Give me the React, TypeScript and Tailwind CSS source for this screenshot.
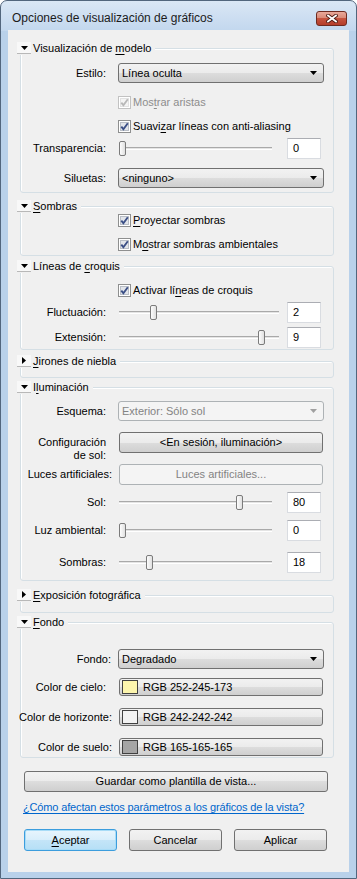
import type { ReactNode } from 'react'

const btnFace = 'border border-[#707070] bg-[linear-gradient(#f2f2f2,#ebebeb_50%,#dddddd_50%,#cfcfcf)]'
const btnOff = 'border border-[#adb2b5] bg-[#f4f4f4] text-[#838383]'

function U({ children }: { children: ReactNode }) {
  return <span className="underline decoration-1 underline-offset-2">{children}</span>
}

function Arrow({ off }: { off?: boolean }) {
  return (
    <svg width="7" height="4" viewBox="0 0 7 4" className="shrink-0">
      <path d="M0 0h7L3.5 4z" fill={off ? '#a0a0a0' : '#000'} />
    </svg>
  )
}

function Header({ open = true, children }: { open?: boolean; children: ReactNode }) {
  return (
    <div className="relative z-10 -ml-[3px] flex h-[14px] w-fit items-center bg-[#f0f0f0] pr-[4px]">
      <div className="flex h-[12px] w-[14px] items-center justify-center border-b border-[#b8b8b8] bg-[#f8f8f8]">
        {open ? (
          <Arrow />
        ) : (
          <svg width="4" height="7" viewBox="0 0 4 7">
            <path d="M0 0v7L4 3.5z" fill="#000" />
          </svg>
        )}
      </div>
      <span className="ml-[2px] whitespace-nowrap">{children}</span>
    </div>
  )
}

function Section({ title, open = true, className, bodyClass, children }: {
  title: ReactNode; open?: boolean; className: string; bodyClass: string; children?: ReactNode
}) {
  return (
    <div className={`ml-[12px] mr-[15px] ${className}`}>
      <Header open={open}>{title}</Header>
      <div className={`-mt-[7px] rounded-[3px] border border-[#d5dfe5] shadow-[inset_1px_1px_0_#fff] ${bodyClass}`}>
        {children}
      </div>
    </div>
  )
}

function Row({ label, className = '', labelClass = '', children }: {
  label: ReactNode; className?: string; labelClass?: string; children: ReactNode
}) {
  return (
    <div className={`flex items-center ${className}`}>
      <div className="flex w-[85px] justify-end whitespace-nowrap">
        <span className={labelClass}>{label}</span>
      </div>
      <div className="ml-[12px] w-[206px]">{children}</div>
    </div>
  )
}

function Combo({ value, off }: { value: string; off?: boolean }) {
  return (
    <div className={`flex h-[20px] items-center justify-between rounded-[3px] pl-[3px] pr-[6px] ${off ? btnOff : btnFace}`}>
      <span>{value}</span>
      <Arrow off={off} />
    </div>
  )
}

function Check({ off }: { off?: boolean }) {
  return (
    <svg width="13" height="13" viewBox="0 0 13 13" className="shrink-0">
      <rect x="0.5" y="0.5" width="12" height="12" fill="#fff" stroke={off ? '#c2c2c2' : '#8e8f8f'} />
      <rect x="2.5" y="2.5" width="8" height="8" fill={off ? '#f4f4f4' : '#e2e5ea'} stroke={off ? '#e2e2e2' : '#b9bec6'} />
      <path d="M3.3 6.6L5.4 9.2L9.8 3.3" fill="none" stroke={off ? '#b8b8b8' : '#3b4f86'} strokeWidth="1.9" />
    </svg>
  )
}

function CheckRow({ off, className, children }: { off?: boolean; className: string; children: ReactNode }) {
  return (
    <div className={`flex h-[20px] items-center pl-[97px] ${className}`}>
      <Check off={off} />
      <span className={`ml-[2px] ${off ? 'text-[#8d8d8d]' : ''}`}>{children}</span>
    </div>
  )
}

function Slider({ label, value, track, thumb, className }: {
  label: string; value: string; track: string; thumb: string; className: string
}) {
  return (
    <Row label={label} className={`h-[21px] ${className}`}>
      <div className="flex items-center justify-between">
        <div className={`relative ml-[1px] h-[21px] ${track}`}>
          <div className="absolute left-0 right-0 top-[9px] h-[3px] border-t border-b border-t-[#a9a9a9] border-b-white bg-[#e4e4e4]" />
          <div className={`absolute top-[3px] h-[15px] w-[7px] rounded-[2px] border border-[#7b7b7b] bg-[linear-gradient(90deg,#fdfdfd,#e0e0e0)] ${thumb}`} />
        </div>
        <div className="mr-[3px] flex h-[21px] w-[34px] items-center border border-[#d9dce1] border-t-[#abadb3] bg-white pl-[5px]">
          {value}
        </div>
      </div>
    </Row>
  )
}

function ColorBtn({ label, swatch, value, className, labelClass }: {
  label: string; swatch: string; value: string; className: string; labelClass?: string
}) {
  return (
    <Row label={label} className={`h-[18px] ${className}`} labelClass={labelClass}>
      <div className={`ml-[1px] flex h-[18px] w-[204px] items-center rounded-[3px] ${btnFace}`}>
        <div className={`ml-[2px] h-[14px] w-[16px] border border-[#404040] ${swatch}`} />
        <span className="ml-[5px]">{value}</span>
      </div>
    </Row>
  )
}

export default function App() {
  return (
    <div className="h-[879px] w-[357px] bg-white font-['Liberation_Sans',Arial,sans-serif] text-[11px] leading-[13px] text-black">
      <div className="flex h-[879px] flex-col rounded-t-[7px] border border-[#52667d] bg-[linear-gradient(#dae7f5,#c2d7ee_30px,#b9d1ea_30px)] px-[7px] pb-[6px]">
        {/* title bar */}
        <div className="flex h-[29px] items-start justify-between">
          <div className="pl-[4px] pt-[10px] text-[12px] leading-[14px] text-[#1b1b1b]">
            Opciones de visualización de gráficos
          </div>
          <div className="mr-[2px] mt-[10px] flex h-[15px] w-[31px] items-center justify-center rounded-[3px] border border-[#6e2a20] bg-[linear-gradient(#e9a99a,#d98a78_45%,#c6543f_50%,#b43d2a)]">
            <svg width="12" height="9" viewBox="0 0 12 9">
              <path d="M2 1.5L10 7.5M10 1.5L2 7.5" stroke="#4d1a12" strokeWidth="3.6" strokeLinecap="square" />
              <path d="M2 1.5L10 7.5M10 1.5L2 7.5" stroke="#fff" strokeWidth="1.8" strokeLinecap="square" />
            </svg>
          </div>
        </div>

        {/* client area */}
        <div className="h-[842px] bg-[#f0f0f0]">
          <Section title={<>Visualización de <U>m</U>odelo</>} className="mt-[11px]" bodyClass="pt-[14px] pb-[4px]">
            <Row label="Estilo:" className="h-[20px]"><Combo value="Línea oculta" /></Row>
            <CheckRow off className="mt-[9px]">Mos<U>t</U>rar aristas</CheckRow>
            <CheckRow className="mt-[4px]">Suavi<U>z</U>ar líneas con anti-aliasing</CheckRow>
            <Slider label="Transparencia:" value="0" track="w-[153px]" thumb="left-0" className="mt-[2px]" />
            <Row label="Siluetas:" className="mt-[9px] h-[20px]"><Combo value="<ninguno>" /></Row>
          </Section>

          <Section title={<><U>S</U>ombras</>} className="mt-[6px]" bodyClass="pt-[3px] pb-[1px]">
            <CheckRow className=""><U>P</U>royectar sombras</CheckRow>
            <CheckRow className="mt-[4px]">M<U>o</U>strar sombras ambientales</CheckRow>
          </Section>

          <Section title={<>Líneas de <U>c</U>roquis</>} className="mt-[3px]" bodyClass="pt-[13px] pb-[1px]">
            <CheckRow className="">Activar lí<U>n</U>eas de croquis</CheckRow>
            <Slider label="Fluctuación:" value="2" track="w-[160px]" thumb="left-[31px]" className="mt-[2px]" />
            <Slider label="Extensión:" value="9" track="w-[160px]" thumb="left-[139px]" className="mt-[4px]" />
          </Section>

          <Section title={<><U>J</U>irones de niebla</>} open={false} className="mt-[4px]" bodyClass="h-[17px]" />

          <Section title={<>I<U>l</U>uminación</>} className="mt-[2px]" bodyClass="pt-[13px] pb-[7px]">
            <Row label="Esquema:" className="h-[20px]"><Combo value="Exterior: Sólo sol" off /></Row>
            <div className="mt-[11px] flex h-[30px] items-start">
              <div className="mt-[4px] w-[85px] text-right">Configuración<br />de sol:</div>
              <div className={`ml-[13px] flex h-[21px] w-[204px] items-center justify-center rounded-[3px] ${btnFace}`}>
                &lt;En sesión, iluminación&gt;
              </div>
            </div>
            <Row label="Luces artificiales:" labelClass="-mr-[6px]" className="mt-[2px] h-[21px]">
              <div className={`ml-[1px] flex h-[21px] w-[204px] items-center justify-center rounded-[3px] ${btnOff}`}>
                Luces artificiales...
              </div>
            </Row>
            <Slider label="Sol:" value="80" track="w-[153px]" thumb="left-[117px]" className="mt-[7px]" />
            <Slider label="Luz ambiental:" value="0" track="w-[153px]" thumb="left-0" className="mt-[7px]" />
            <Slider label="Sombras:" value="18" track="w-[153px]" thumb="left-[27px]" className="mt-[11px]" />
          </Section>

          <Section title={<><U>E</U>xposición fotográfica</>} open={false} className="mt-[7px]" bodyClass="h-[18px]" />

          <Section title={<><U>F</U>ondo</>} className="mt-[2px]" bodyClass="pt-[26px] pb-[1px]">
            <Row label="Fondo:" labelClass="-mr-[5px]" className="h-[20px]"><Combo value="Degradado" /></Row>
            <ColorBtn label="Color de cielo:" swatch="bg-[#fcf5ad]" value="RGB 252-245-173" className="mt-[9px]" />
            <ColorBtn label="Color de horizonte:" labelClass="-mr-[6px]" swatch="bg-[#f2f2f2]" value="RGB 242-242-242" className="mt-[12px]" />
            <ColorBtn label="Color de suelo:" labelClass="-mr-[6px]" swatch="bg-[#a5a5a5]" value="RGB 165-165-165" className="mt-[12px]" />
          </Section>

          <div className={`ml-[16px] mt-[13px] flex h-[21px] w-[304px] items-center justify-center rounded-[3px] ${btnFace}`}>
            Guardar como plantilla de vista...
          </div>

          <div className="ml-[15px] mt-[9px] tracking-[-0.15px] text-[#0066cc] underline decoration-1 underline-offset-2">
            ¿Cómo afectan estos parámetros a los gráficos de la vista?
          </div>

          <div className="ml-[16px] mt-[15px] flex gap-[12px]">
            <div className="flex h-[22px] w-[93px] items-center justify-center rounded-[3px] border border-[#3c9ddd] bg-[linear-gradient(#e8f5fd,#d8eefb_50%,#c4e5f8_50%,#b6dff6)] shadow-[inset_0_0_0_1px_#a8dcf7]">
              <U>A</U>ceptar
            </div>
            <div className={`flex h-[22px] w-[93px] items-center justify-center rounded-[3px] ${btnFace}`}>Cancelar</div>
            <div className={`flex h-[22px] w-[93px] items-center justify-center rounded-[3px] ${btnFace}`}>Aplicar</div>
          </div>
        </div>
      </div>
    </div>
  )
}
